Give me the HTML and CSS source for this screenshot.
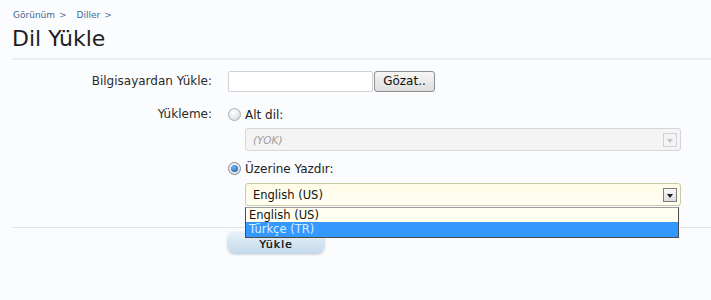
FILE: index.html
```html
<!DOCTYPE html>
<html lang="tr">
<head>
<meta charset="utf-8">
<title>Dil Yükle</title>
<link rel="stylesheet" href="styles.css">
</head>
<body>
<div class="page">
  <nav class="crumbs">
    <a href="#">Görünüm</a><span class="sep">&gt;</span>
    <a href="#">Diller</a><span class="sep">&gt;</span>
  </nav>
  <h1 class="title">Dil Yükle</h1>
  <div class="rule"></div>
  <form class="form">
    <div class="row row-file">
      <div class="label">Bilgisayardan Yükle:</div>
      <div class="field file-field">
        <div class="file-input"></div>
        <div class="browse">Gözat..</div>
      </div>
    </div>
    <div class="row row-mode">
      <div class="label">Yükleme:</div>
      <div class="field options">
        <div class="radio-line"><span class="radio"></span><span class="radio-text">Alt dil:</span></div>
        <div class="select disabled"><span class="select-text">(YOK)</span><span class="arrow"></span></div>
        <div class="radio-line second"><span class="radio checked"></span><span class="radio-text">Üzerine Yazdır:</span></div>
        <div class="select-wrap">
          <div class="select active"><span class="select-text">English (US)</span><span class="arrow"></span></div>
          <ul class="dropdown">
            <li class="opt">English (US)</li>
            <li class="opt selected">Türkçe (TR)</li>
          </ul>
        </div>
      </div>
    </div>
    <div class="rule bottom-rule"></div>
    <div class="row row-submit">
      <div class="label"></div>
      <div class="field"><div class="submit">Yükle</div></div>
    </div>
  </form>
</div>
</body>
</html>
```
FILE: styles.css
```css
html, body {
  margin: 0;
  padding: 0;
  background: #fbfcfe;
}
body {
  font-family: "DejaVu Sans", Verdana, sans-serif;
  color: #222;
  width: 711px;
  height: 300px;
  overflow: hidden;
}
.page {
  padding: 9px 0 0 12px;
}
.crumbs {
  font-size: 9px;
  line-height: 12px;
  padding-left: 1px;
  display: flex;
  align-items: center;
}
.crumbs a {
  color: #3f6890;
  text-decoration: none;
}
.crumbs .sep {
  color: #55708a;
  margin: 0 10px 0 4px;
  font-size: 9px;
}
.title {
  margin: 0;
  font-weight: normal;
  font-size: 22px;
  line-height: 28px;
  color: #1e1e1e;
  padding-top: 4px;
  letter-spacing: 0;
}
.rule {
  height: 2px;
  background: #e7f0f1;
  margin-top: 5px;
}
.form {
  padding-top: 11px;
}
.row {
  display: flex;
  align-items: flex-start;
}
.label {
  width: 200px;
  text-align: right;
  font-size: 12px;
  color: #2a2a2a;
  flex: none;
}
.field {
  margin-left: 16px;
}
.row-file .label {
  line-height: 21px;
}
.file-field {
  display: flex;
}
.file-input {
  width: 143px;
  height: 19px;
  border: 1px solid #cfd3d8;
  border-radius: 2px;
  background: #fff;
}
.browse {
  width: 59px;
  height: 19px;
  margin-left: 1px;
  border: 1px solid #8c8f94;
  border-radius: 3px;
  background: linear-gradient(#f6f6f6, #dedede);
  font-size: 12px;
  line-height: 19px;
  text-align: center;
  color: #111;
}
.row-mode {
  margin-top: 16px;
}
.row-mode .label {
  line-height: 13px;
}
.options {
  width: 452px;
}
.radio-line {
  display: flex;
  align-items: center;
  height: 13px;
}
.radio-line.second {
  margin-top: 11px;
}
.radio {
  width: 11px;
  height: 11px;
  border-radius: 50%;
  border: 1px solid #a9adb2;
  background: radial-gradient(circle at 40% 35%, #ffffff, #d2d4d8);
  box-sizing: content-box;
  position: relative;
  flex: none;
}
.radio.checked {
  border-color: #7d8896;
}
.radio.checked::after {
  content: "";
  position: absolute;
  left: 2px;
  top: 2px;
  width: 7px;
  height: 7px;
  border-radius: 50%;
  background: radial-gradient(circle at 40% 35%, #6fb7ff, #17549e);
}
.radio-text {
  font-size: 12px;
  margin-left: 4px;
  color: #222;
}
.select {
  margin-left: 17px;
  height: 21px;
  border: 1px solid #d3d6da;
  border-radius: 3px;
  display: flex;
  align-items: center;
  justify-content: space-between;
  padding: 0 3px 0 7px;
  width: 424px;
}
.select.disabled {
  margin-top: 7px;
  background: #f4f4f4;
}
.select.disabled .select-text {
  font-style: italic;
  color: #9a9a9a;
  font-size: 10.5px;
}
.select-wrap {
  position: relative;
  margin-top: 8px;
}
.select.active {
  background: linear-gradient(#fffbe6, #fffff3);
  border-color: #c9c9a8;
}
.select.active .select-text {
  font-size: 11.5px;
  color: #111;
}
.arrow {
  width: 14px;
  height: 14px;
  border: 1px solid #cfd2d6;
  background: #f4f4f4;
  position: relative;
  box-sizing: border-box;
}
.arrow::after {
  content: "";
  position: absolute;
  left: 3px;
  top: 5px;
  border-left: 3.5px solid transparent;
  border-right: 3.5px solid transparent;
  border-top: 4px solid #c0c4c8;
}
.select.active .arrow {
  border-color: #7f7f7f;
  background: linear-gradient(#fafafa, #dcdcdc);
}
.select.active .arrow::after {
  border-top-color: #1b1b1b;
}
.dropdown {
  position: absolute;
  left: 17px;
  top: 24px;
  width: 432px;
  margin: 0;
  padding: 0;
  list-style: none;
  border: 1px solid #4b4b4b;
  border-top-color: #9a9a9a;
  background: #fffff2;
  z-index: 5;
}
.opt {
  font-size: 11.5px;
  line-height: 14px;
  height: 14px;
  padding-left: 3px;
  color: #111;
}
.opt.selected {
  background: #3399ff;
  color: #dcedff;
  height: 15px;
  line-height: 15px;
}
.bottom-rule {
  margin-top: 21px;
  height: 1px;
  background: #dbe7ea;
}
.row-submit {
  margin-top: 4px;
}
.submit {
  width: 96px;
  height: 21px;
  border-radius: 6px;
  background: linear-gradient(#e8f1f8, #c4d9ea);
  box-shadow: 0 1px 3px rgba(80, 110, 140, 0.45);
  text-align: center;
  font-size: 11px;
  font-weight: normal;
  line-height: 26px;
  letter-spacing: 1px;
  color: #222;
  text-shadow: 0.3px 0 0 #222;
}
```
